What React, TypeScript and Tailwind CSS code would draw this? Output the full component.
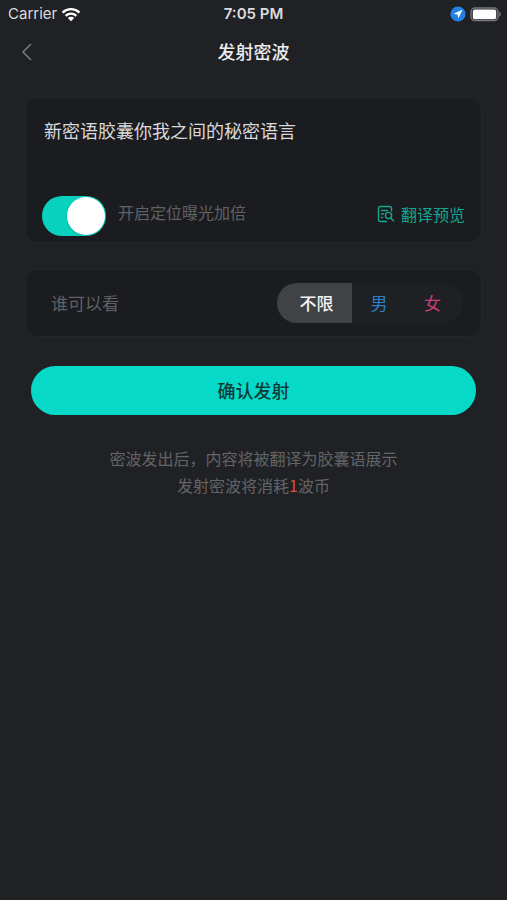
import { useState } from "react";

const audiences = [
  { value: "all", label: "不限", width: "w-[75px] pl-1", color: "text-[#f2f2f3] font-medium" },
  { value: "male", label: "男", width: "w-[54px]", color: "text-[#2f7fc8]" },
  { value: "female", label: "女", width: "w-[57px] pr-1", color: "text-[#cf3f78]" },
];

const StatusBar = () => {
  return (
    <div className="grid h-7 grid-cols-3 items-center px-2 font-['Inter','Noto_Sans',sans-serif] text-[#dcdcde]">
      <div className="flex items-center gap-1 text-[15px]">
        <span>Carrier</span>
        <svg width="20" height="15" viewBox="0 0 20 15" fill="none" stroke="#fff" strokeWidth="2.4">
          <path d="M1.6 5.6a12 12 0 0 1 16.8 0" />
          <path d="M4.7 8.8a7.6 7.6 0 0 1 10.6 0" />
          <path d="M10 14.2 6.8 11a4.6 4.6 0 0 1 6.4 0z" fill="#fff" stroke="none" />
        </svg>
      </div>
      <span className="text-center text-[15px] font-semibold">7:05 PM</span>
      <div className="-mr-0.5 flex items-center justify-end gap-1">
        <svg width="16" height="16" viewBox="0 0 16 16">
          <circle cx="8" cy="8" r="7.6" fill="#2080e4" />
          <path d="M12.4 3.8 3.6 7.8l4 .6.8 4z" fill="#fff" />
        </svg>
        <svg width="31" height="15" viewBox="0 0 31 15">
          <rect x="1" y="1" width="27" height="12.6" rx="4" fill="none" stroke="#77787b" strokeWidth="1.4" />
          <rect x="2.8" y="2.4" width="23.4" height="9.8" rx="2" fill="#fff" />
          <path d="M29.2 4.8v5c1-.5 1.6-1.4 1.6-2.5s-.6-2-1.6-2.5z" fill="#77787b" />
        </svg>
      </div>
    </div>
  );
};

const PreviewIcon = () => {
  return (
    <svg width="18" height="18" viewBox="0 0 18 18" fill="none" stroke="currentColor" strokeWidth="1.4" strokeLinecap="round" strokeLinejoin="round">
      <path d="M14.5 6V3.5a2 2 0 0 0-2-2h-9a2 2 0 0 0-2 2v11a2 2 0 0 0 2 2h6" />
      <path d="M4.5 5.5h6M4.5 9h2M4.5 12.5h1" />
      <circle cx="11.5" cy="10.5" r="3.1" />
      <path d="m13.8 12.9 2.8 3" />
    </svg>
  );
};

export default function App() {
  const [message, setMessage] = useState("新密语胶囊你我之间的秘密语言");
  const [boost, setBoost] = useState(true);
  const [audience, setAudience] = useState("all");

  return (
    <div className="min-h-screen border-b border-[#2b2025] bg-[#202125] font-['Noto_Sans_CJK_SC',sans-serif]">
      <StatusBar />
      <header className="grid h-12 grid-cols-[48px_1fr_48px] items-center">
        <button aria-label="返回" className="flex h-12 items-center pl-5">
          <svg width="14" height="20" viewBox="0 0 14 20" fill="none" stroke="#77787c" strokeWidth="1.6">
            <path d="M11 2 3 10l8 8" />
          </svg>
        </button>
        <h1 className="pb-0.5 text-center text-lg font-medium text-[#ededee]">发射密波</h1>
      </header>

      <main className="px-[25px] pt-[21px]">
        <section className="rounded-xl border border-[#24262a] bg-[#1b1c20] px-4 pt-[18px] pb-1.5">
          <textarea
            aria-label="密波内容"
            value={message}
            onChange={(e) => setMessage(e.target.value)}
            className="block h-20 w-full resize-none bg-transparent px-0.5 text-lg text-[#d9d9db] outline-none"
          />
          <div className="flex items-center">
            <label className="flex items-center gap-3 text-base text-[#606165]">
              <input type="checkbox" role="switch" checked={boost} onChange={(e) => setBoost(e.target.checked)} className="peer sr-only" />
              <span className="flex h-10 w-16 items-center rounded-full bg-[#3a3b3f] p-px peer-checked:justify-end peer-checked:bg-[#08d1bd]">
                <span className="size-[38px] rounded-full bg-white shadow" />
              </span>
              <span className="pb-2">开启定位曝光加倍</span>
            </label>
            <button className="ml-auto flex items-center gap-1.5 pb-1 text-base text-[#15a68f]">
              <PreviewIcon />
              翻译预览
            </button>
          </div>
        </section>

        <fieldset className="mt-[26px] flex h-[68px] items-center rounded-xl border border-[#24262a] bg-[#1b1c20] pr-[18px] pl-[25px]">
          <span id="audience" className="text-[17px] text-[#606165]">谁可以看</span>
          <div role="radiogroup" aria-labelledby="audience" className="ml-auto flex h-10 overflow-hidden rounded-full bg-[#1f2024] text-[17px]">
            {audiences.map((item) => (
              <label key={item.value} className={`flex items-center justify-center has-checked:bg-[#414246] ${item.width} ${item.color}`}>
                <input
                  type="radio"
                  name="audience"
                  value={item.value}
                  checked={audience === item.value}
                  onChange={() => setAudience(item.value)}
                  className="sr-only"
                />
                {item.label}
              </label>
            ))}
          </div>
        </fieldset>

        <div className="px-1.5 pt-[29px]">
          <button className="h-[49px] w-full rounded-full bg-[#06d9c7] pb-0.5 text-lg font-medium text-[#0d3b3b]">确认发射</button>
        </div>

        <p className="pt-[30px] text-center text-base leading-[27px] text-[#636468]">
          密波发出后，内容将被翻译为胶囊语展示
          <br />
          发射密波将消耗<span className="text-[#d9532c]">1</span>波币
        </p>
      </main>
    </div>
  );
}
